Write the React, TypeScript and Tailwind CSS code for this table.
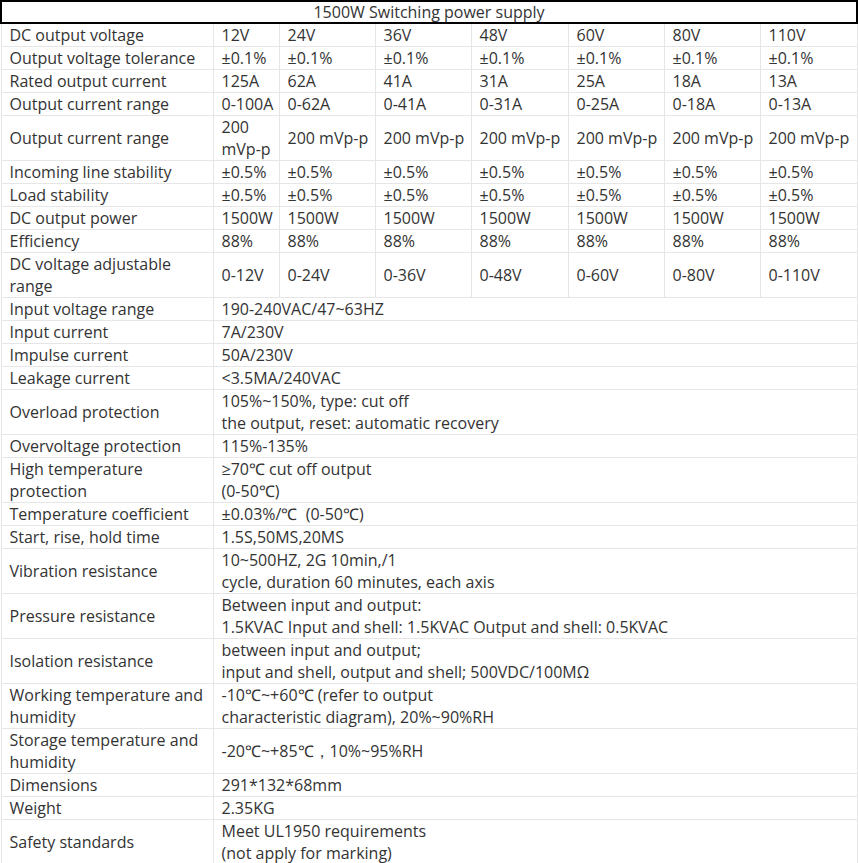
const volts = ["12V", "24V", "36V", "48V", "60V", "80V", "110V"];

const multiRows: [string, string[]][] = [
  ["Output voltage tolerance", Array(7).fill("±0.1%")],
  ["Rated output current", ["125A", "62A", "41A", "31A", "25A", "18A", "13A"]],
  ["Output current range", ["0-100A", "0-62A", "0-41A", "0-31A", "0-25A", "0-18A", "0-13A"]],
  ["Output current range", Array(7).fill("200 mVp-p")],
  ["Incoming line stability", Array(7).fill("±0.5%")],
  ["Load stability", Array(7).fill("±0.5%")],
  ["DC output power", Array(7).fill("1500W")],
  ["Efficiency", Array(7).fill("88%")],
  ["DC voltage adjustable range", ["0-12V", "0-24V", "0-36V", "0-48V", "0-60V", "0-80V", "0-110V"]],
];

const specRows: [string, string[]][] = [
  ["Input voltage range", ["190-240VAC/47~63HZ"]],
  ["Input current", ["7A/230V"]],
  ["Impulse current", ["50A/230V"]],
  ["Leakage current", ["<3.5MA/240VAC"]],
  ["Overload protection", ["105%~150%, type: cut off", "the output, reset: automatic recovery"]],
  ["Overvoltage protection", ["115%-135%"]],
  ["High temperature protection", ["≥70℃ cut off output", "(0-50℃)"]],
  ["Temperature coefficient", ["±0.03%/℃  (0-50℃)"]],
  ["Start, rise, hold time", ["1.5S,50MS,20MS"]],
  ["Vibration resistance", ["10~500HZ, 2G 10min,/1", "cycle, duration 60 minutes, each axis"]],
  ["Pressure resistance", ["Between input and output:", "1.5KVAC Input and shell: 1.5KVAC Output and shell: 0.5KVAC"]],
  ["Isolation resistance", ["between input and output;", "input and shell, output and shell; 500VDC/100MΩ"]],
  ["Working temperature and humidity", ["-10℃~+60℃ (refer to output", "characteristic diagram), 20%~90%RH"]],
  ["Storage temperature and humidity", ["-20℃~+85℃，10%~95%RH"]],
  ["Dimensions", ["291*132*68mm"]],
  ["Weight", ["2.35KG"]],
  ["Safety standards", ["Meet UL1950 requirements", "(not apply for marking)"]],
];

const cell = "border border-[#e6e6e6] pl-2 pr-1 py-0 align-middle text-left font-normal";

export default function App() {
  return (
    <div
      className="w-[858px] h-[863px] overflow-hidden bg-white text-[#333] text-[16px] leading-[22px]"
      style={{ fontFamily: '"Open Sans", "Liberation Sans", sans-serif' }}
    >
      <table className="table-fixed border-collapse w-[856px]">
        <colgroup>
          <col className="w-[212px]" />
          <col className="w-[66px]" />
          <col className="w-[96px]" />
          <col className="w-[96px]" />
          <col className="w-[97px]" />
          <col className="w-[96px]" />
          <col className="w-[96px]" />
          <col className="w-[97px]" />
        </colgroup>
        <thead>
          <tr>
            <th colSpan={8} className="border-2 border-black h-[22px] p-0 text-center font-normal leading-[20px]">
              1500W Switching power supply
            </th>
          </tr>
        </thead>
        <tbody>
          <tr>
            <td className={cell}>DC output voltage</td>
            {volts.map((v) => (
              <td key={v} className={cell}>{v}</td>
            ))}
          </tr>
          {multiRows.map(([label, vals], i) => (
            <tr key={i}>
              <td className={cell}>{label}</td>
              {vals.map((v, j) => (
                <td key={j} className={cell}>{v}</td>
              ))}
            </tr>
          ))}
          {specRows.map(([label, lines], i) => (
            <tr key={i}>
              <td className={cell}>{label}</td>
              <td colSpan={7} className={cell}>
                {lines.map((l, j) => (
                  <div key={j} className="whitespace-pre">{l}</div>
                ))}
              </td>
            </tr>
          ))}
        </tbody>
      </table>
      <div className="border-t-2 border-black" />
    </div>
  );
}
